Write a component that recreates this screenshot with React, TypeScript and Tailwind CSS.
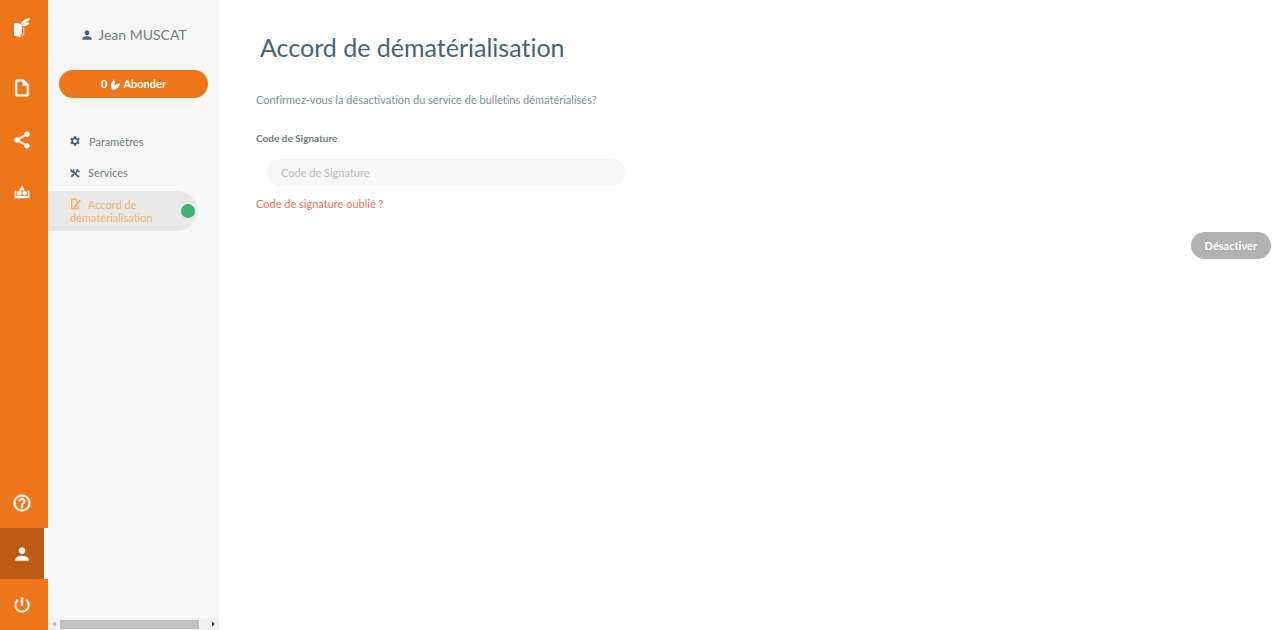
import type { ReactNode } from "react";
import {
  MdHelpOutline,
  MdOutlineInsertDriveFile,
  MdPerson,
  MdPowerSettingsNew,
  MdSettings,
  MdShare,
} from "react-icons/md";

interface RailItemProps {
  label: string;
  active?: boolean;
  children: ReactNode;
}

function Logo() {
  return (
    <svg viewBox="0 0 18 20" className="h-5 w-[18px]" fill="currentColor">
      <path d="M1 5 L7 5.500 L9 7.500 V15.500 L7.500 16 V19.500 L1 17.500 Z" />
      <path d="M8 17 H10.800 V9" fill="none" stroke="currentColor" strokeWidth="0.7" />
      <path d="M8 6 C9 3 12 0.500 17 0.300 C16.500 3 13 5 9 6.800 Z" />
      <path d="M9 7.500 C11 5 13.500 4.500 16.500 5 C15 8 12 9 9 7.500 Z" />
    </svg>
  );
}

function ToyBoxIcon() {
  return (
    <svg viewBox="0 0 16 14" className="h-3.5 w-4" fill="currentColor">
      <path d="M8 0.500 L11 5.500 H5 Z" />
      <path d="M3.200 6.200 H7.500 V10.500 H3.200 Z" />
      <circle cx="10.500" cy="8.300" r="2.300" />
      <path d="M0.500 5.500 H2.300 V11 H13.700 V5.500 H15.500 V13.200 H0.500 Z" />
    </svg>
  );
}

function LeafIcon() {
  return (
    <svg viewBox="0 0 10 12" className="h-3 w-2.5" fill="currentColor">
      <path d="M3.800 0 C5 2 5.200 4.500 4.300 7.500 C5.500 5.600 7.200 4.600 10 4.300 C9.500 8 7.200 10.300 3.300 11 C1 10 0.300 7.300 1.200 4.500 C1.800 2.800 3.300 1.800 3.800 0 Z" />
    </svg>
  );
}

function ToolsIcon() {
  return (
    <svg viewBox="0 0 12 12" className="h-3 w-2.5" fill="none" stroke="currentColor">
      <path d="M3 3.500 L9.500 10" strokeWidth="2.200" />
      <path d="M1.200 1.500 V3.200 L2.700 4.500 L4.300 3.200 V1.700" strokeWidth="1.700" />
      <path d="M1.500 10.500 L5 7 M7 5.500 L8.500 4" strokeWidth="2.200" />
      <path d="M9 1 L8.200 3.500 L10.500 4.200 L11.300 3" strokeWidth="1.600" />
      <path d="M9 11 L11 9.500" strokeWidth="1.700" />
    </svg>
  );
}

function SignIcon() {
  return (
    <svg viewBox="0 0 12 12" className="h-3 w-3" fill="none" stroke="currentColor">
      <path d="M6.500 1.200 H1.700 V10.500 H8.500 V7.500" strokeWidth="1.400" />
      <path d="M10.200 2 L5.500 8" strokeWidth="2" />
      <path d="M3.500 8.500 H6.500 M6.500 1.500 V3.800 H8" strokeWidth="1.200" />
    </svg>
  );
}

function RailItem({ label, active, children }: RailItemProps) {
  return (
    <a
      href="#"
      aria-label={label}
      className={`flex h-[51px] items-center justify-center border-r-4 [&_path[fill=none]]:stroke-none ${
        active ? "border-gray-50 bg-[#bd5c15]" : "border-transparent"
      }`}
    >
      {children}
    </a>
  );
}

function Rail() {
  return (
    <nav className="flex w-12 shrink-0 flex-col bg-[#ed751a] text-white">
      <a href="#" aria-label="Accueil" className="flex h-[62px] justify-center pt-[18px] pr-1">
        <Logo />
      </a>
      <div className="flex flex-col gap-px">
        <RailItem label="Documents">
          <MdOutlineInsertDriveFile className="size-5" strokeWidth="0.8" />
        </RailItem>
        <RailItem label="Partage">
          <MdShare className="size-5" strokeWidth="0.8" />
        </RailItem>
        <RailItem label="Boîte à outils">
          <ToyBoxIcon />
        </RailItem>
      </div>
      <div className="mt-auto">
        <RailItem label="Aide">
          <MdHelpOutline className="size-5" strokeWidth="0.6" />
        </RailItem>
        <RailItem label="Profil" active>
          <MdPerson className="size-5" />
        </RailItem>
        <RailItem label="Déconnexion">
          <MdPowerSettingsNew className="size-5" strokeWidth="0.4" />
        </RailItem>
      </div>
    </nav>
  );
}

function Sidebar() {
  return (
    <aside className="flex w-[171px] shrink-0 flex-col bg-[#f7f7f7] text-[#6f7f86]">
      <div className="flex items-center justify-center gap-1 pt-[26px] text-sm leading-[18px]">
        <MdPerson className="size-3.5 text-[#456575]" />
        <span>Jean MUSCAT</span>
      </div>

      <button className="mx-[11px] mt-[26px] flex h-7 items-center justify-center gap-[3px] rounded-full bg-[#ed751a] pt-px text-[11px] font-bold text-white">
        0
        <LeafIcon />
        Abonder
      </button>

      <ul className="mt-[27px] text-[11px] leading-[13px]">
        <li>
          <a href="#" className="flex h-8 items-center gap-2 pl-[21px]">
            <MdSettings className="size-3 text-[#456575]" />
            Paramètres
          </a>
        </li>
        <li>
          <a href="#" className="mb-[3px] flex h-[31px] items-center gap-2 pl-[22px]">
            <span className="text-[#456575]">
              <ToolsIcon />
            </span>
            Services
          </a>
        </li>
        <li>
          <a
            href="#"
            className="mr-[22px] flex h-10 items-center rounded-r-full bg-[#e9e9e9] pr-[2px] pl-[22px] text-[#f0b470]"
          >
            <span className="flex-1">
              <span className="mr-1.5 inline-block align-top">
                <SignIcon />
              </span>
              Accord de dématérialisation
            </span>
            <span className="size-3.5 rounded-full bg-[#44b272]" />
          </a>
        </li>
      </ul>

      {/* Horizontal scroll bar */}
      <div className="mt-auto flex h-3 items-center justify-between bg-[#f1f1f1] px-1">
        <svg viewBox="0 0 4 6" className="h-1.5 w-1 fill-[#a3a3a3]">
          <path d="M3.500 0.500 V5.500 L1 3 Z" />
        </svg>
        <div className="mr-3 ml-1 h-[9px] flex-1 bg-[#c1c1c1]" />
        <svg viewBox="0 0 4 6" className="h-1.5 w-1 fill-black">
          <path d="M1 0.500 V5.500 L3.500 3 Z" />
        </svg>
      </div>
    </aside>
  );
}

export default function App() {
  return (
    <div className="flex min-h-screen bg-white font-['Lato',sans-serif] [font-variant-ligatures:none]">
      <Rail />
      <Sidebar />
      <main className="flex-1 pt-[31px] pr-[9px] pl-[37px] text-[11px] leading-4">
        <h1 className="pl-1 text-[25px] leading-8 text-[#456575]">
          Accord de dématérialisation
        </h1>
        <p className="mt-[29px] text-[#78909c]">
          Confirmez-vous la désactivation du service de bulletins dématérialisés?
        </p>
        <form>
          <label htmlFor="code" className="mt-[22px] block text-[10px] font-bold text-[#6f7f86]">
            Code de Signature
          </label>
          <input
            id="code"
            type="password"
            placeholder="Code de Signature"
            className="mt-[13px] ml-[11px] block h-[27px] w-[358px] rounded-full bg-[#f7f7f7] px-3.5 outline-none placeholder:text-[#bdbdbd]"
          />
          <a href="#" className="mt-2.5 block text-[#ec7357]">
            Code de signature oublié ?
          </a>
          <div className="mt-5 flex justify-end">
            <button
              type="button"
              className="h-[27px] rounded-full bg-[#b2b2b2] px-3.5 font-bold text-white"
            >
              Désactiver
            </button>
          </div>
        </form>
      </main>
    </div>
  );
}
